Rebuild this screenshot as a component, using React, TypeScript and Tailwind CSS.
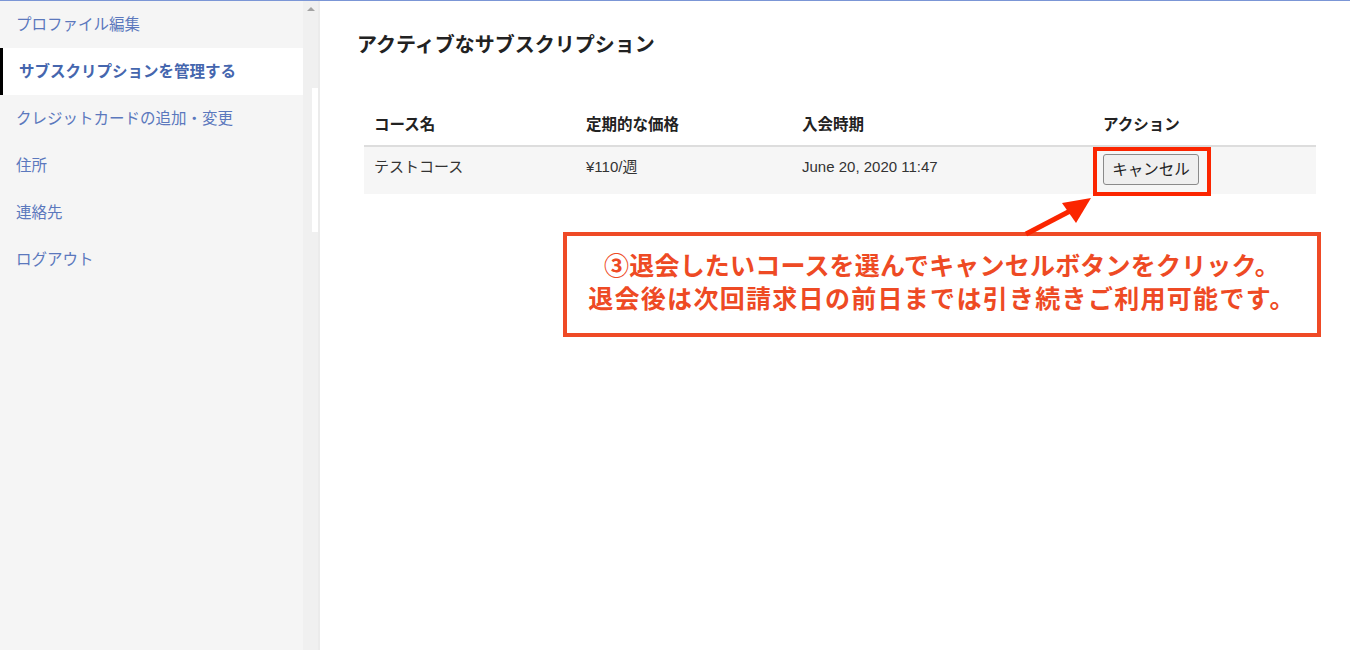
import React from "react";

const jp = { fontFamily: '"Liberation Sans", "Noto Sans CJK JP", sans-serif' };

const items = [
  "プロファイル編集",
  "サブスクリプションを管理する",
  "クレジットカードの追加・変更",
  "住所",
  "連絡先",
  "ログアウト",
];

export default function App() {
  return (
    <div
      className="relative flex h-[650px] w-[1350px] overflow-hidden border-t border-[#7b96d6] bg-white"
      style={jp}
    >
      {/* Sidebar */}
      <aside className="flex w-[303px] flex-col bg-[#f5f5f5]">
        {items.map((t, i) =>
          i === 1 ? (
            <div
              key={t}
              className="flex h-[47px] items-center border-l-[3px] border-black bg-white pl-[16px] text-[15.5px] font-bold text-[#4566ae]"
            >
              {t}
            </div>
          ) : (
            <div
              key={t}
              className="flex h-[47px] items-center pl-[16px] text-[15.5px] text-[#5b78bd]"
            >
              {t}
            </div>
          )
        )}
      </aside>

      {/* Scrollbar column */}
      <div className="flex w-[17px] flex-col items-end border-r-2 border-[#ebebeb] bg-[#f0f0f0]">
        <div className="flex w-full justify-start pl-[4px] pt-[6px]">
          <div className="h-0 w-0 border-x-[4px] border-b-[4px] border-x-transparent border-b-[#a3a3a3]" />
        </div>
        <div className="mt-[77px] h-[144px] w-[6px] bg-white" />
      </div>

      {/* Main */}
      <main className="flex flex-1 flex-col pt-[32px]">
        <h1 className="ml-[37px] text-[20px] font-bold leading-[24px] text-[#222]">
          アクティブなサブスクリプション
        </h1>

        <div className="ml-[44px] mt-[47px] w-[952px]">
          <div className="grid h-[43px] grid-cols-[212px_216px_301px_1fr] items-center border-b-2 border-[#dddddd] text-[15.5px] font-bold text-[#222]">
            <div className="px-[10px]">コース名</div>
            <div className="px-[10px]">定期的な価格</div>
            <div className="px-[10px]">入会時期</div>
            <div className="px-[10px]">アクション</div>
          </div>
          <div className="grid h-[47px] grid-cols-[212px_216px_301px_1fr] bg-[#f6f6f6] text-[15px] text-[#333]">
            <div className="px-[10px] pt-[9px]">テストコース</div>
            <div className="px-[10px] pt-[9px]">¥110/週</div>
            <div className="px-[10px] pt-[9px]">June 20, 2020 11:47</div>
            <div className="relative px-[10px] pt-[7px]">
              <button className="h-[31px] w-[96px] rounded-[3px] border border-[#8a8a8a] bg-[#efefef] text-[15.5px] text-[#222]">
                キャンセル
              </button>
              <div className="absolute left-0 top-0 h-[49px] w-[118px] border-4 border-[#fb2500]" />
            </div>
          </div>
        </div>

        <div className="ml-[243px] mt-[38px] flex h-[105px] w-[758px] flex-col items-center justify-center border-4 border-[#ef4a26] bg-white pb-[4px] text-[25px] font-bold leading-[33px] text-[#ee4a24]">
          <div className="tracking-[0.2px]">③退会したいコースを選んでキャンセルボタンをクリック。</div>
          <div className="tracking-[1.3px]">退会後は次回請求日の前日までは引き続きご利用可能です。</div>
        </div>
      </main>

      {/* Arrow annotation */}
      <svg
        className="absolute left-[1020px] top-[189px]"
        width="80"
        height="50"
        viewBox="0 0 80 50"
      >
        <line x1="6" y1="44" x2="52" y2="20" stroke="#fb2500" strokeWidth="5" />
        <polygon points="71,8 42,13 56,33" fill="#fb2500" />
      </svg>
    </div>
  );
}
